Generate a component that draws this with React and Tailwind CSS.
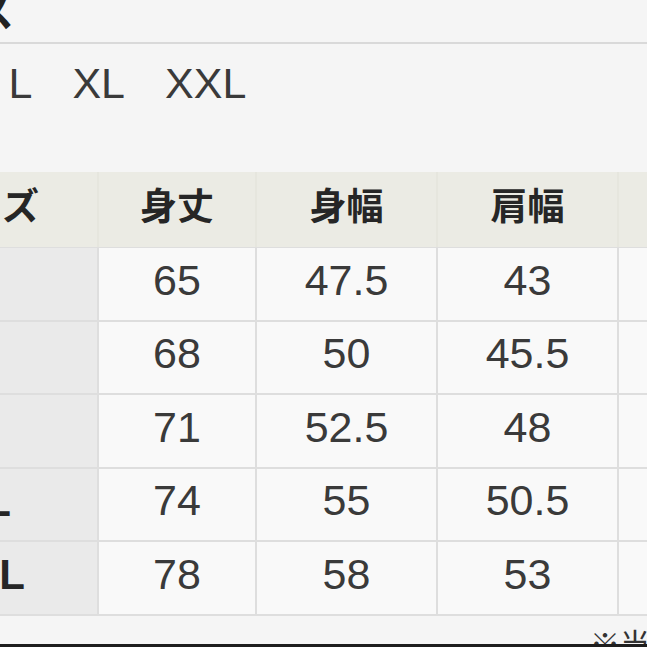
export default function App() {
  const rows = [
    ["S", "65", "47.5", "43", "20"],
    ["M", "68", "50", "45.5", "21"],
    ["L", "71", "52.5", "48", "22"],
    ["XL", "74", "55", "50.5", "23"],
    ["XXL", "78", "58", "53", "24"],
  ];
  const heads = ["サイズ", "身丈", "身幅", "肩幅", "袖丈"];
  return (
    <div className="w-[647px] h-[647px] overflow-hidden bg-[#f5f5f5] flex flex-col font-['Liberation_Sans','Noto_Sans_CJK_JP',sans-serif]">
      <div className="h-[42px] overflow-hidden shrink-0">
        <div className="ml-[-28px] mt-[-12px] text-[42px] leading-[42px] font-bold text-[#222] font-['Noto_Sans_CJK_JP',sans-serif] whitespace-nowrap">
          ス
        </div>
      </div>
      <div className="h-[2px] bg-[#d9d9d9] shrink-0" />
      <div className="h-[128px] shrink-0 pt-[18px] overflow-hidden">
        <div className="flex gap-[40px] ml-[-136px] text-[43px] leading-[43px] text-[#3a3a3a] whitespace-nowrap">
          <span>S</span>
          <span>M</span>
          <span>L</span>
          <span>XL</span>
          <span>XXL</span>
        </div>
      </div>
      <div className="ml-[-129px] w-[930px] shrink-0">
        <div className="grid grid-cols-[226px_156px_179px_179px_179px] gap-x-[2px] bg-[#e6e6de] h-[75px]">
          {heads.map((h) => (
            <div
              key={h}
              className="bg-[#ebebe4] flex items-center justify-center pb-[9px] text-[37px] font-bold text-[#262626] font-['Noto_Sans_CJK_JP',sans-serif]"
            >
              {h}
            </div>
          ))}
        </div>
        <div className="grid grid-cols-[226px_156px_179px_179px_179px] gap-[2px] bg-[#dedede] pt-[1px] pb-[2px]">
          {rows.map((r) =>
            r.map((v, i) => (
              <div
                key={r[0] + i}
                className={
                  i === 0
                    ? "h-[71.5px] bg-[#eaeaea] flex items-center justify-center pb-[6px] text-[42px] font-bold text-[#262626]"
                    : "h-[71.5px] bg-[#f9f9f9] flex items-center justify-center pb-[8px] text-[43px] text-[#3a3a3a]"
                }
              >
                {v}
              </div>
            ))
          )}
        </div>
      </div>
      <div className="h-[17px] mt-[11px] overflow-hidden shrink-0">
        <div className="pl-[590px] text-[30px] leading-[30px] text-[#333] whitespace-nowrap font-['Noto_Sans_CJK_JP',sans-serif]">
          ※当店平均採寸サイズ
        </div>
      </div>
      <div className="flex-1" />
      <div className="h-[3px] bg-[#1e1e1e] shrink-0" />
    </div>
  );
}
